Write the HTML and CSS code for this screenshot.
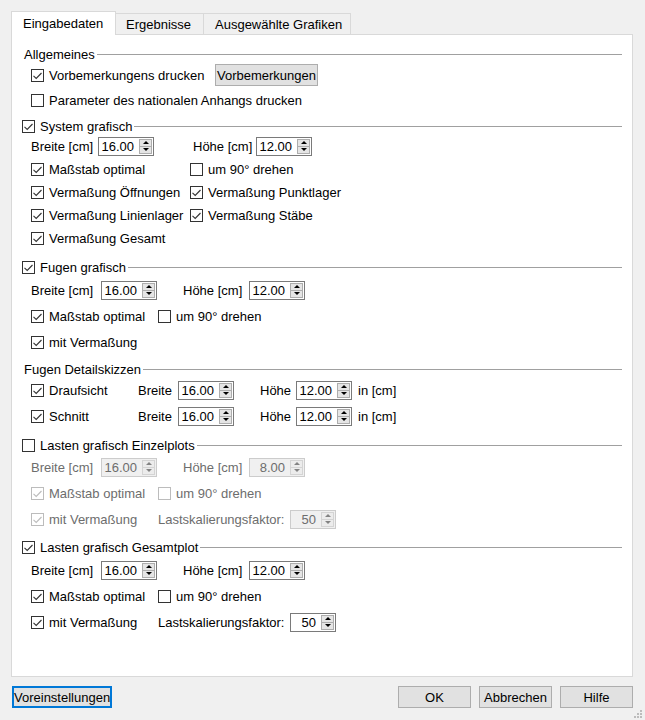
FILE: index.html
```html
<!DOCTYPE html>
<html lang="de">

    <head>
        <meta charset="UTF-8">
        <meta name="viewport" content="width=device-width, initial-scale=1.0">
        <title>Ausgabe</title>

        <link rel="stylesheet" href="styles.css">
    </head>

    <body>
        <div class="dialog">
            <div class="tabs">
                <div class="tab active">Eingabedaten</div>
                <div class="tab tab-results">Ergebnisse</div>
                <div class="tab tab-graphics">Ausgewählte Grafiken</div>
            </div>

            <div class="panel">
                <!-- Allgemeines -->
                <section class="group g-general">
                    <div class="group-head plain"><span>Allgemeines</span></div>
                    <div class="rows">
                        <div class="row">
                            <label class="check w184"><span class="box"><svg viewBox="0 0 11 11"><path d="M1.5 5.8L4.2 8.5L9.5 3"/></svg></span>Vorbemerkungens drucken</label>
                            <button class="btn btn-notes">Vorbemerkungen</button>
                        </div>
                        <div class="row">
                            <label class="check"><span class="box"></span>Parameter des nationalen Anhangs drucken</label>
                        </div>
                    </div>
                </section>

                <!-- System grafisch -->
                <section class="group g-system">
                    <div class="group-head"><label class="check"><span class="box"><svg viewBox="0 0 11 11"><path d="M1.5 5.8L4.2 8.5L9.5 3"/></svg></span>System grafisch</label></div>
                    <div class="rows">
                        <div class="row">
                            <span class="w67">Breite [cm]</span>
                            <span class="spin"><span class="spin-val">16.00</span><span class="spin-btns"><i class="up"></i><i class="down"></i></span></span>
                            <span class="ml39 w63">Höhe [cm]</span>
                            <span class="spin"><span class="spin-val">12.00</span><span class="spin-btns"><i class="up"></i><i class="down"></i></span></span>
                        </div>
                        <div class="row">
                            <label class="check w159"><span class="box"><svg viewBox="0 0 11 11"><path d="M1.5 5.8L4.2 8.5L9.5 3"/></svg></span>Maßstab optimal</label>
                            <label class="check"><span class="box"></span>um 90° drehen</label>
                        </div>
                        <div class="row">
                            <label class="check w159"><span class="box"><svg viewBox="0 0 11 11"><path d="M1.5 5.8L4.2 8.5L9.5 3"/></svg></span>Vermaßung Öffnungen</label>
                            <label class="check"><span class="box"><svg viewBox="0 0 11 11"><path d="M1.5 5.8L4.2 8.5L9.5 3"/></svg></span>Vermaßung Punktlager</label>
                        </div>
                        <div class="row">
                            <label class="check w159"><span class="box"><svg viewBox="0 0 11 11"><path d="M1.5 5.8L4.2 8.5L9.5 3"/></svg></span>Vermaßung Linienlager</label>
                            <label class="check"><span class="box"><svg viewBox="0 0 11 11"><path d="M1.5 5.8L4.2 8.5L9.5 3"/></svg></span>Vermaßung Stäbe</label>
                        </div>
                        <div class="row">
                            <label class="check"><span class="box"><svg viewBox="0 0 11 11"><path d="M1.5 5.8L4.2 8.5L9.5 3"/></svg></span>Vermaßung Gesamt</label>
                        </div>
                    </div>
                </section>

                <!-- Fugen grafisch -->
                <section class="group g-joints">
                    <div class="group-head"><label class="check"><span class="box"><svg viewBox="0 0 11 11"><path d="M1.5 5.8L4.2 8.5L9.5 3"/></svg></span>Fugen grafisch</label></div>
                    <div class="rows">
                        <div class="row">
                            <span class="w70">Breite [cm]</span>
                            <span class="spin"><span class="spin-val">16.00</span><span class="spin-btns"><i class="up"></i><i class="down"></i></span></span>
                            <span class="ml26 w66">Höhe [cm]</span>
                            <span class="spin"><span class="spin-val">12.00</span><span class="spin-btns"><i class="up"></i><i class="down"></i></span></span>
                        </div>
                        <div class="row">
                            <label class="check w127"><span class="box"><svg viewBox="0 0 11 11"><path d="M1.5 5.8L4.2 8.5L9.5 3"/></svg></span>Maßstab optimal</label>
                            <label class="check"><span class="box"></span>um 90° drehen</label>
                        </div>
                        <div class="row">
                            <label class="check"><span class="box"><svg viewBox="0 0 11 11"><path d="M1.5 5.8L4.2 8.5L9.5 3"/></svg></span>mit Vermaßung</label>
                        </div>
                    </div>
                </section>

                <!-- Fugen Detailskizzen -->
                <section class="group g-sketch">
                    <div class="group-head plain"><span>Fugen Detailskizzen</span></div>
                    <div class="rows">
                        <div class="row">
                            <label class="check w107"><span class="box"><svg viewBox="0 0 11 11"><path d="M1.5 5.8L4.2 8.5L9.5 3"/></svg></span>Draufsicht</label>
                            <span class="w40">Breite</span>
                            <span class="spin"><span class="spin-val">16.00</span><span class="spin-btns"><i class="up"></i><i class="down"></i></span></span>
                            <span class="ml26 w36">Höhe</span>
                            <span class="spin"><span class="spin-val">12.00</span><span class="spin-btns"><i class="up"></i><i class="down"></i></span></span>
                            <span class="ml6">in [cm]</span>
                        </div>
                        <div class="row">
                            <label class="check w107"><span class="box"><svg viewBox="0 0 11 11"><path d="M1.5 5.8L4.2 8.5L9.5 3"/></svg></span>Schnitt</label>
                            <span class="w40">Breite</span>
                            <span class="spin"><span class="spin-val">16.00</span><span class="spin-btns"><i class="up"></i><i class="down"></i></span></span>
                            <span class="ml26 w36">Höhe</span>
                            <span class="spin"><span class="spin-val">12.00</span><span class="spin-btns"><i class="up"></i><i class="down"></i></span></span>
                            <span class="ml6">in [cm]</span>
                        </div>
                    </div>
                </section>

                <!-- Lasten grafisch Einzelplots (disabled) -->
                <section class="group g-single">
                    <div class="group-head"><label class="check"><span class="box"></span>Lasten grafisch Einzelplots</label></div>
                    <div class="rows disabled">
                        <div class="row">
                            <span class="w70">Breite [cm]</span>
                            <span class="spin"><span class="spin-val">16.00</span><span class="spin-btns"><i class="up"></i><i class="down"></i></span></span>
                            <span class="ml26 w66">Höhe [cm]</span>
                            <span class="spin"><span class="spin-val">8.00</span><span class="spin-btns"><i class="up"></i><i class="down"></i></span></span>
                        </div>
                        <div class="row">
                            <label class="check w127"><span class="box"><svg viewBox="0 0 11 11"><path d="M1.5 5.8L4.2 8.5L9.5 3"/></svg></span>Maßstab optimal</label>
                            <label class="check"><span class="box"></span>um 90° drehen</label>
                        </div>
                        <div class="row">
                            <label class="check w127"><span class="box"><svg viewBox="0 0 11 11"><path d="M1.5 5.8L4.2 8.5L9.5 3"/></svg></span>mit Vermaßung</label>
                            <span class="w132">Lastskalierungsfaktor:</span>
                            <span class="spin spin-sm"><span class="spin-val">50</span><span class="spin-btns"><i class="up"></i><i class="down"></i></span></span>
                        </div>
                    </div>
                </section>

                <!-- Lasten grafisch Gesamtplot -->
                <section class="group g-total">
                    <div class="group-head"><label class="check"><span class="box"><svg viewBox="0 0 11 11"><path d="M1.5 5.8L4.2 8.5L9.5 3"/></svg></span>Lasten grafisch Gesamtplot</label></div>
                    <div class="rows">
                        <div class="row">
                            <span class="w70">Breite [cm]</span>
                            <span class="spin"><span class="spin-val">16.00</span><span class="spin-btns"><i class="up"></i><i class="down"></i></span></span>
                            <span class="ml26 w66">Höhe [cm]</span>
                            <span class="spin"><span class="spin-val">12.00</span><span class="spin-btns"><i class="up"></i><i class="down"></i></span></span>
                        </div>
                        <div class="row">
                            <label class="check w127"><span class="box"><svg viewBox="0 0 11 11"><path d="M1.5 5.8L4.2 8.5L9.5 3"/></svg></span>Maßstab optimal</label>
                            <label class="check"><span class="box"></span>um 90° drehen</label>
                        </div>
                        <div class="row">
                            <label class="check w127"><span class="box"><svg viewBox="0 0 11 11"><path d="M1.5 5.8L4.2 8.5L9.5 3"/></svg></span>mit Vermaßung</label>
                            <span class="w132">Lastskalierungsfaktor:</span>
                            <span class="spin spin-sm"><span class="spin-val">50</span><span class="spin-btns"><i class="up"></i><i class="down"></i></span></span>
                        </div>
                    </div>
                </section>
            </div>

            <div class="footer">
                <button class="btn btn-default">Voreinstellungen</button>
                <button class="btn btn-action push">OK</button>
                <button class="btn btn-action">Abbrechen</button>
                <button class="btn btn-action">Hilfe</button>
            </div>
        </div>

        <svg class="grip" viewBox="0 0 8 8" width="8" height="8">
            <rect x="6" y="0" width="2" height="2"/>
            <rect x="3" y="3" width="2" height="2"/>
            <rect x="6" y="3" width="2" height="2"/>
            <rect x="0" y="6" width="2" height="2"/>
            <rect x="3" y="6" width="2" height="2"/>
            <rect x="6" y="6" width="2" height="2"/>
        </svg>
    </body>

</html>
```

FILE: styles.css
```css
* {
    box-sizing: border-box;
}

html,
body {
    margin: 0;
    padding: 0;
    background-color: #f0f0f0;
    font-family: "Liberation Sans", Arial, sans-serif;
    font-size: 13px;
    color: #000;
}

body {
    width: 645px;
    height: 720px;
    position: relative;
    overflow: hidden;
}

.dialog {
    padding: 11px 12px 0 11px;
}

/* tabs */

.tabs {
    display: flex;
    align-items: flex-end;
    height: 23px;
}

.tab {
    height: 21px;
    line-height: 21px;
    border: 1px solid #d9d9d9;
    border-bottom: none;
    margin-left: -1px;
    white-space: nowrap;
}

.tab.active {
    width: 105px;
    height: 24px;
    line-height: 24px;
    margin-left: 0;
    margin-bottom: -1px;
    padding-left: 11px;
    background-color: #fff;
    position: relative;
    z-index: 1;
}

.tab-results {
    width: 89px;
    padding-left: 10px;
}

.tab-graphics {
    width: 148px;
    padding-left: 11px;
}

.panel {
    width: 622px;
    height: 643px;
    background-color: #fff;
    border: 1px solid #d9d9d9;
    padding: 9px 10px 0 0;
}

/* groups */

.group-head {
    display: flex;
    align-items: center;
    height: 20px;
    padding-left: 10px;
    white-space: nowrap;
}

.group-head.plain {
    padding-left: 12px;
}

.group-head::after {
    content: '';
    flex: 1;
    height: 1px;
    margin-left: 2px;
    background-color: #a0a0a0;
}

.rows {
    display: flex;
    flex-direction: column;
    gap: 6px;
    margin-top: 3px;
    padding-left: 19px;
}

.row {
    display: flex;
    align-items: center;
    height: 20px;
    white-space: nowrap;
}

.g-general .rows {
    gap: 5px;
    margin-top: 1px;
}

.g-system {
    margin-top: 6px;
}

.g-system .rows {
    gap: 3px;
    margin-top: 0;
}

.g-joints {
    margin-top: 9px;
}

.g-sketch {
    margin-top: 7px;
}

.g-sketch .rows {
    margin-top: 1px;
}

.g-single {
    margin-top: 9px;
}

.g-single .rows {
    margin-top: 2px;
}

.g-total {
    margin-top: 8px;
}

/* fixed cells */

.w36 { width: 36px; }
.w40 { width: 40px; }
.w63 { width: 63px; }
.w66 { width: 66px; }
.w67 { width: 67px; }
.w70 { width: 70px; }
.w107 { width: 107px; }
.w127 { width: 127px; }
.w132 { width: 132px; }
.w159 { width: 159px; }
.w184 { width: 184px; }

.ml6 { margin-left: 6px; }
.ml26 { margin-left: 26px; }
.ml39 { margin-left: 39px; }

/* checkbox */

.check {
    display: flex;
    align-items: center;
    flex-shrink: 0;
}

.box {
    width: 13px;
    height: 13px;
    border: 1px solid #333;
    background-color: #fff;
    margin-right: 5px;
    flex-shrink: 0;
}

.box svg {
    display: block;
    width: 11px;
    height: 11px;
}

.box path {
    fill: none;
    stroke: #333;
    stroke-width: 1.1;
}

/* spin box */

.spin {
    display: flex;
    align-items: center;
    width: 56px;
    height: 19px;
    border: 1px solid #7a7a7a;
    background-color: #fff;
    flex-shrink: 0;
}

.spin-sm {
    width: 46px;
}

.spin-val {
    flex: 1;
    text-align: right;
    padding-right: 5px;
}

.spin-btns {
    width: 13px;
    height: 15px;
    margin-right: 1px;
    border: 1px solid #adadad;
    background-color: #e5e5e5;
    display: flex;
    flex-direction: column;
}

.spin-btns i {
    flex: 1;
    display: flex;
    align-items: center;
    justify-content: center;
}

.spin-btns i + i {
    border-top: 1px solid #adadad;
}

.spin-btns i::after {
    content: '';
    border-left: 3px solid transparent;
    border-right: 3px solid transparent;
}

.spin-btns .up::after {
    border-bottom: 3px solid #000;
}

.spin-btns .down::after {
    border-top: 3px solid #000;
}

/* disabled state */

.disabled {
    color: #6d6d6d;
}

.disabled .box {
    border-color: #bcbcbc;
}

.disabled .box path {
    stroke: #bcbcbc;
}

.disabled .spin {
    border-color: #cccccc;
    background-color: #f0f0f0;
}

.disabled .spin-btns {
    border-color: #d4d4d4;
    background-color: #ececec;
}

.disabled .spin-btns i + i {
    border-top-color: #d4d4d4;
}

.disabled .spin-btns .up::after {
    border-bottom-color: #838383;
}

.disabled .spin-btns .down::after {
    border-top-color: #838383;
}

/* buttons */

.btn {
    font-family: inherit;
    font-size: 13px;
    color: #000;
    background-color: #e1e1e1;
    border: 1px solid #adadad;
    border-radius: 0;
    padding: 0;
    margin: 0;
    height: 22px;
    cursor: pointer;
}

.btn-notes {
    width: 103px;
    height: 22px;
}

.footer {
    display: flex;
    gap: 8px;
    margin-top: 9px;
    padding-left: 1px;
}

.btn-default {
    width: 100px;
    border: 2px solid #0078d7;
}

.btn-action {
    width: 73px;
    border-color: #adadad;
}

.push {
    margin-left: auto;
}

.grip {
    position: absolute;
    right: 3px;
    bottom: 2px;
    fill: #bcbcbc;
}
```
